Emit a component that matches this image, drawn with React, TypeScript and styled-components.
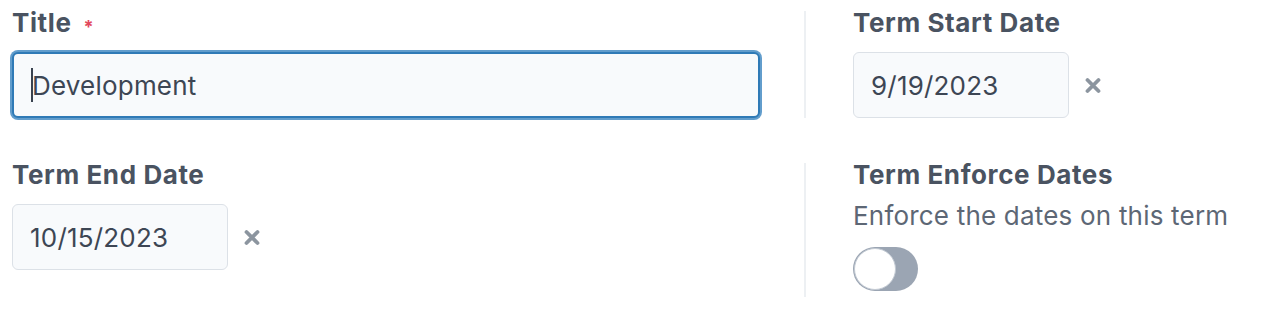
import React from 'react';
import styled, { createGlobalStyle, css } from 'styled-components';

// Base da página
const GlobalStyle = createGlobalStyle`
  html, body {
    margin: 0;
    padding: 0;
    background: #ffffff;
  }
  body {
    font-family: 'Inter', 'Noto Sans', sans-serif;
    -webkit-font-smoothing: antialiased;
  }
`;

const FormGrid = styled.div`
  display: grid;
  grid-template-columns: 792px 1fr;
  row-gap: 45px;
  padding: 11px 0 0 12px;
  width: 1279px;
  box-sizing: border-box;
`;

const Cell = styled.div<{ $divided?: boolean }>`
  display: flex;
  flex-direction: column;
  align-items: flex-start;
  ${(p) =>
    p.$divided &&
    css`
      border-left: 2px solid #edf0f3;
      padding-left: 47px;
    `}
`;

const Label = styled.label`
  font-size: 26px;
  line-height: 24px;
  font-weight: 700;
  color: #4a5361;
  letter-spacing: 0.6px;
  display: flex;
  align-items: center;
`;

const Required = styled.span`
  color: #e2475c;
  font-size: 18px;
  margin-left: 12px;
  line-height: 1;
  transform: translateY(4px);
`;

const Help = styled.div`
  margin-top: 13px;
  font-size: 26px;
  line-height: 32px;
  letter-spacing: 0.2px;
  color: #5d6775;
`;

const FieldRow = styled.div`
  margin-top: 17px;
  display: flex;
  align-items: center;
  gap: 16px;
`;

const InputWrap = styled.div`
  position: relative;
`;

const TextInput = styled.input<{ $width: number; $focused?: boolean }>`
  box-sizing: border-box;
  width: ${(p) => p.$width}px;
  height: 66px;
  padding: 0 17px;
  font-family: 'Inter', 'Noto Sans', sans-serif;
  font-size: 26px;
  letter-spacing: 0.2px;
  color: #3d4654;
  background: #f8fafc;
  border: 1px solid #dce1e7;
  border-radius: 6px;
  outline: none;
  caret-color: transparent;
  ${(p) =>
    p.$focused &&
    css`
      padding: 0 16px 0 18px;
      border: 2px solid #2f7ab6;
      box-shadow: 0 0 0 2px rgba(70, 140, 195, 0.85);
    `}
`;

// cursor de texto desenhado por cima do campo
const Caret = styled.span`
  position: absolute;
  left: 19px;
  top: 16px;
  width: 2px;
  height: 34px;
  background: #39424f;
`;

const ClearButton = styled.button`
  border: none;
  background: none;
  padding: 0;
  width: 16px;
  height: 18px;
  display: flex;
  align-items: center;
  justify-content: center;
  cursor: pointer;
`;

const Toggle = styled.button<{ $on?: boolean }>`
  margin: 15px 0 6px;
  width: 65px;
  height: 44px;
  border-radius: 22px;
  border: none;
  padding: 1px;
  background: ${(p) => (p.$on ? '#2f7ab6' : '#9ba5b3')};
  display: flex;
  justify-content: ${(p) => (p.$on ? 'flex-end' : 'flex-start')};
  align-items: center;
  cursor: pointer;
`;

const Knob = styled.span`
  width: 42px;
  height: 42px;
  border-radius: 50%;
  background: #ffffff;
  box-sizing: border-box;
  border: 1px solid #c3cad3;
`;

const ClearIcon = () => (
  <svg width="16" height="17" viewBox="0 0 16 17">
    <path
      d="M2.5 3 L13.5 14 M13.5 3 L2.5 14"
      stroke="#8c959f"
      strokeWidth="3.8"
      strokeLinecap="round"
    />
  </svg>
);

const DateField: React.FC<{ value: string }> = ({ value }) => (
  <FieldRow>
    <TextInput $width={216} defaultValue={value} readOnly />
    <ClearButton aria-label="Clear">
      <ClearIcon />
    </ClearButton>
  </FieldRow>
);

const App: React.FC = () => {
  const [enforce, setEnforce] = React.useState(false);
  return (
    <>
      <GlobalStyle />
      <FormGrid>
        <Cell>
          <Label>
            Title<Required>*</Required>
          </Label>
          <FieldRow>
            <InputWrap>
              <TextInput $width={748} $focused defaultValue="Development" readOnly />
              <Caret />
            </InputWrap>
          </FieldRow>
        </Cell>
        <Cell $divided>
          <Label>Term Start Date</Label>
          <DateField value="9/19/2023" />
        </Cell>
        <Cell>
          <Label>Term End Date</Label>
          <DateField value="10/15/2023" />
        </Cell>
        <Cell $divided>
          <Label>Term Enforce Dates</Label>
          <Help>Enforce the dates on this term</Help>
          <Toggle $on={enforce} onClick={() => setEnforce(!enforce)} aria-label="Enforce dates">
            <Knob />
          </Toggle>
        </Cell>
      </FormGrid>
    </>
  );
};

export default App;
